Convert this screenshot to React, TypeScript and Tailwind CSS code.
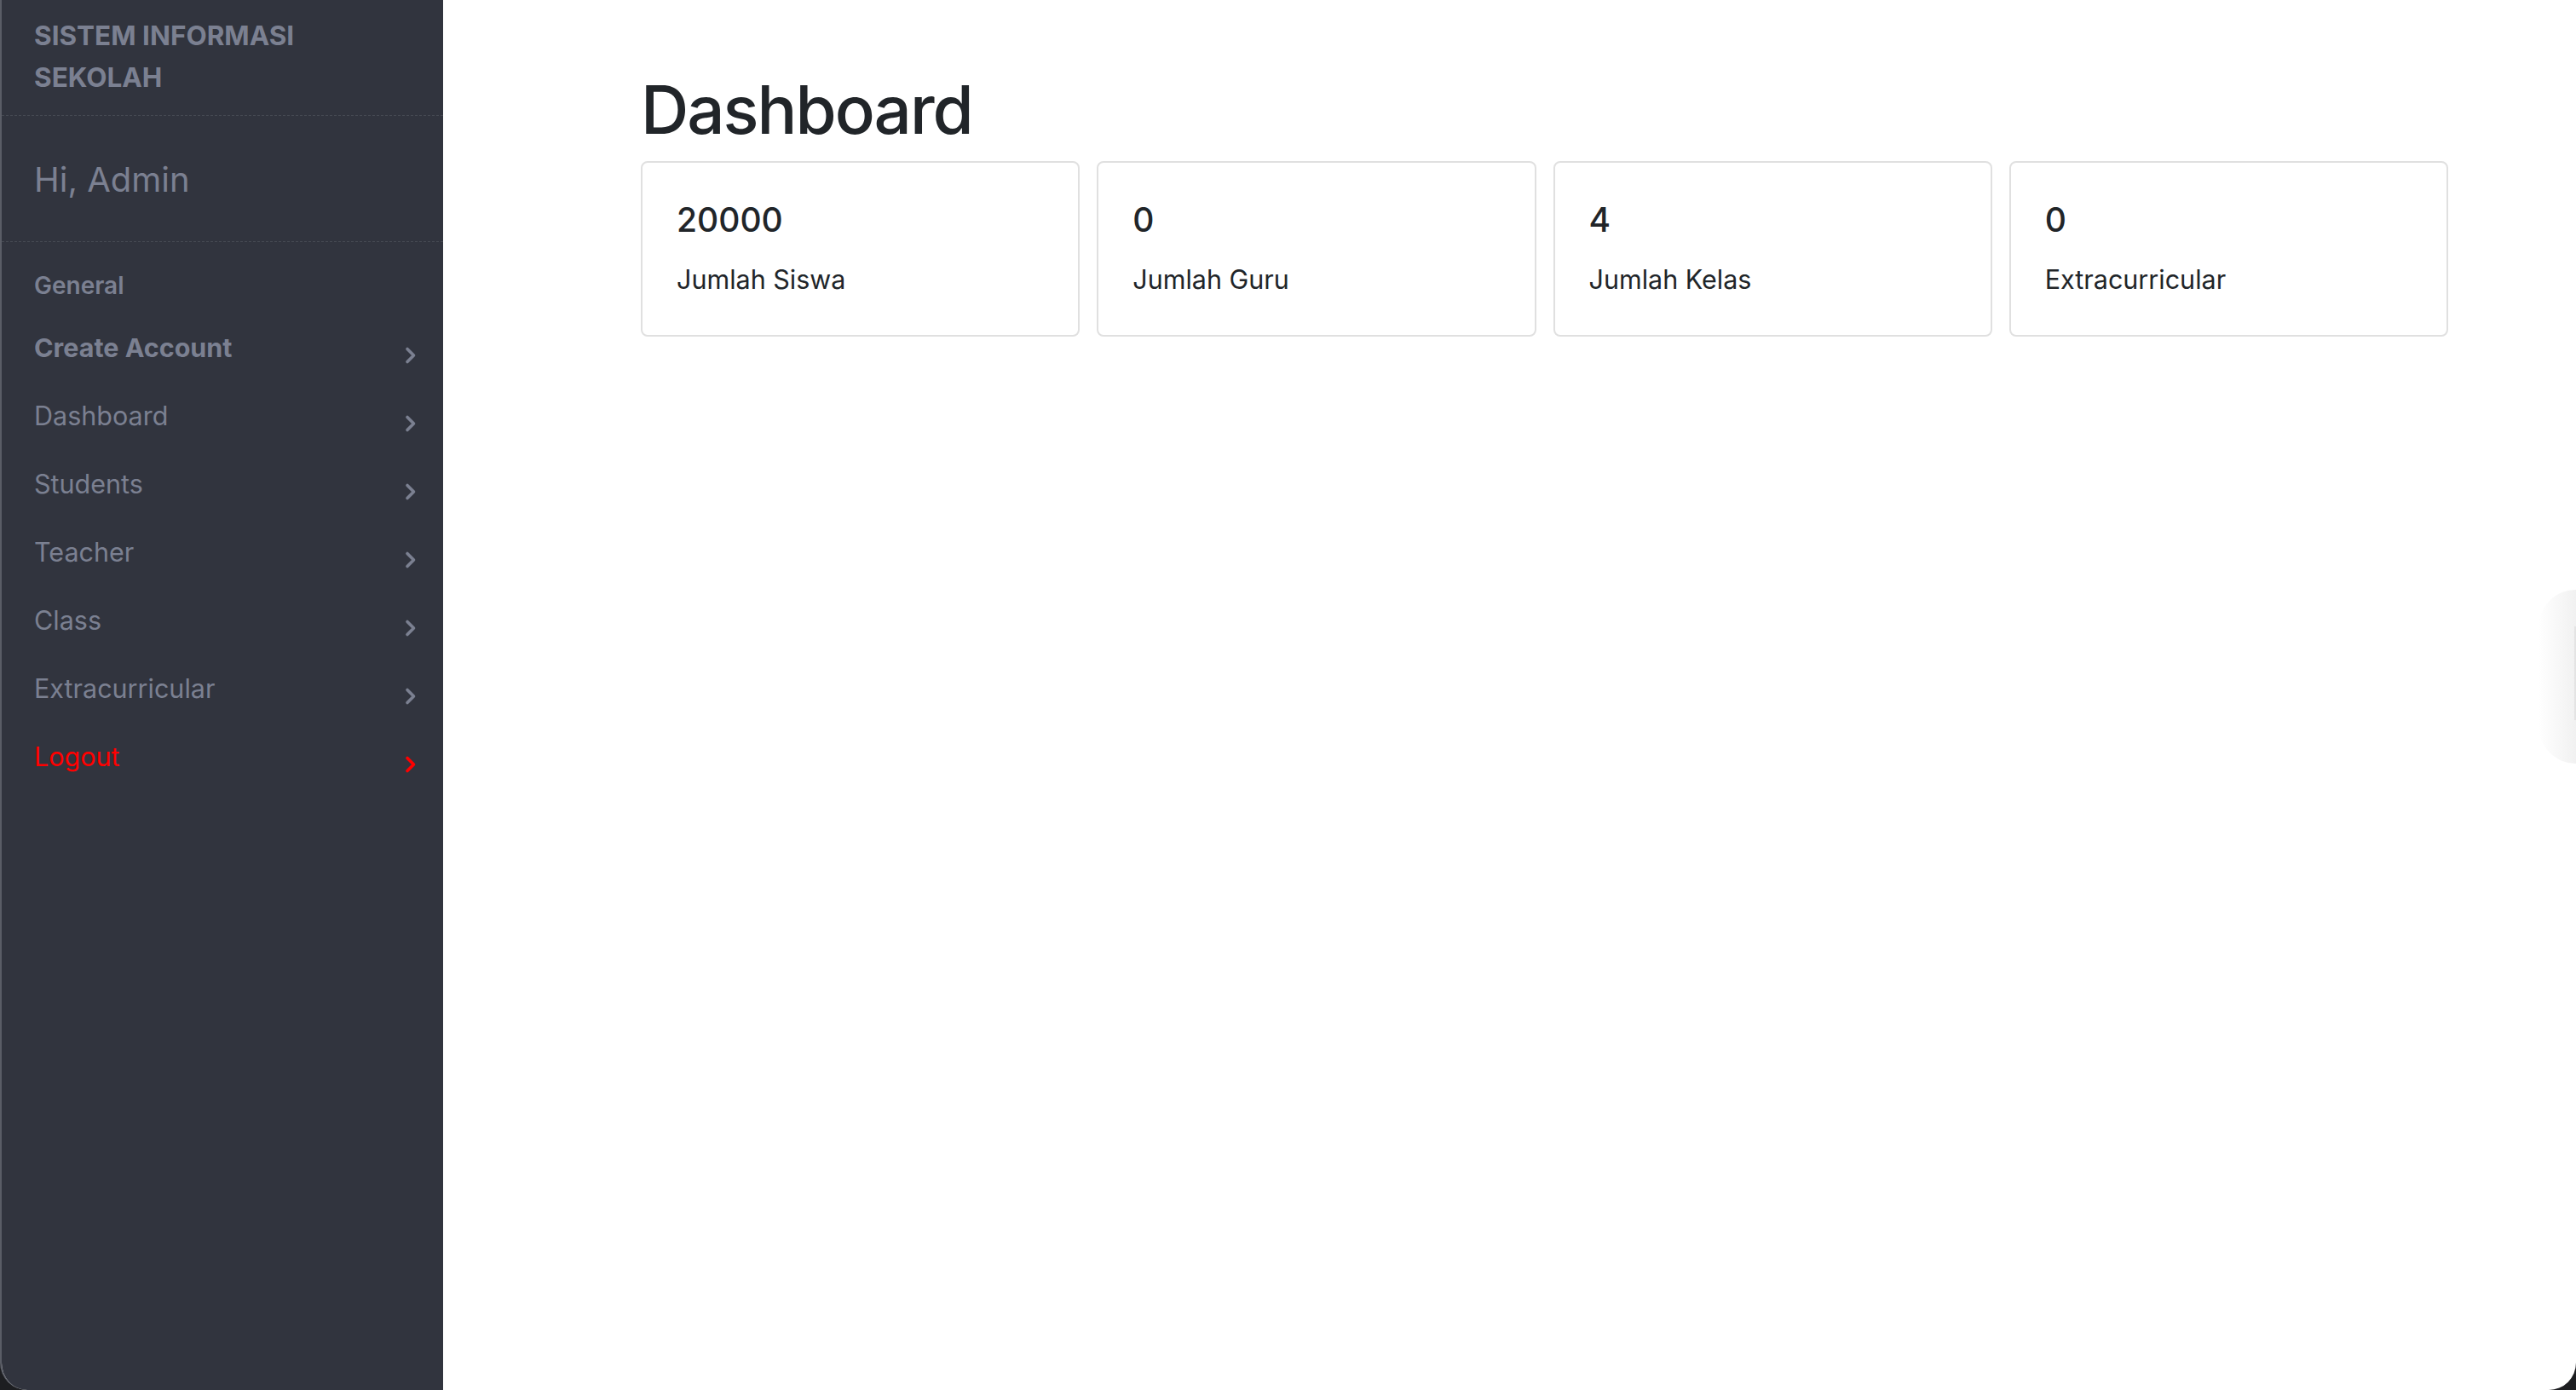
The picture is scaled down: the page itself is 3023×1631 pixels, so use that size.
import React from 'react';

const menu = [
    { label: 'Create Account', bold: true },
    { label: 'Dashboard' },
    { label: 'Students' },
    { label: 'Teacher' },
    { label: 'Class' },
    { label: 'Extracurricular' },
    { label: 'Logout', danger: true },
];

const stats = [
    { value: '20000', label: 'Jumlah Siswa' },
    { value: '0', label: 'Jumlah Guru' },
    { value: '4', label: 'Jumlah Kelas' },
    { value: '0', label: 'Extracurricular' },
];

function Chevron({ color }: { color: string }) {
    return (
        <svg width="16" height="22" viewBox="0 0 16 22" fill="none" className="mt-[18px]">
            <path d="M4 3.5 L11.5 11 L4 18.5" stroke={color} strokeWidth="3.6" strokeLinecap="round" strokeLinejoin="round" />
        </svg>
    );
}

export default function App() {
    return (
        <div className="h-screen w-full bg-[#1d1e21] font-['Inter',sans-serif]">
            <div className="relative flex h-full w-full overflow-hidden rounded-b-[32px] border-l-2 border-[#5a5d66] bg-white">
                {/* Sidebar */}
                <aside className="flex w-[518px] shrink-0 flex-col bg-[#31343e] text-[#7b8091]">
                    <div className="border-b border-dashed border-[#464a53] pl-[38px] pt-[17px] pb-[20px] text-[31.5px] font-bold uppercase leading-[49px]">
                        Sistem Informasi
                        <br />
                        Sekolah
                    </div>
                    <div className="flex h-[148px] items-center border-b border-dashed border-[#464a53] pl-[38px] pt-[3px] text-[40px] font-normal">
                        Hi, Admin
                    </div>

                    <div className="pl-[38px] pt-[35px] text-[28px] font-semibold leading-[32px]">General</div>

                    <nav className="mt-[17px] flex flex-col">
                        {menu.map((item) => (
                            <div key={item.label} className="flex h-[80px] items-center justify-between pl-[38px] pr-[30px]">
                                <span
                                    className={`text-[30.5px] leading-none ${item.bold ? 'font-bold' : 'font-normal'} ${item.danger ? 'text-[#ff0000]' : ''}`}
                                >
                                    {item.label}
                                </span>
                                <Chevron color={item.danger ? '#ff0000' : '#7b8091'} />
                            </div>
                        ))}
                    </nav>
                </aside>

                {/* Main */}
                <main className="flex-1 pl-[232px] pr-[150px] pt-[82px] text-[#212529]">
                    <h1 className="mb-[13px] text-[78px] font-medium leading-[1.2] tracking-[-2px]">Dashboard</h1>
                    <div className="grid grid-cols-4 gap-[20px]">
                        {stats.map((s) => (
                            <div key={s.label} className="rounded-[8px] border-2 border-[#e0e0e0] bg-white px-[40px] pt-[44px] pb-[42px]">
                                <div className="mb-[24px] text-[39px] font-medium leading-[1.2]">{s.value}</div>
                                <div className="text-[30.5px] leading-[1.5]">{s.label}</div>
                            </div>
                        ))}
                    </div>
                </main>

                {/* edge shadow on the right */}
                <div className="absolute right-0 top-[692px] h-[204px] w-[44px] rounded-l-full bg-gradient-to-l from-[#f1f1f1] to-white/0" />
                <div className="absolute right-0 top-[735px] h-[110px] w-[2px] bg-[#e4e4e4]" />
            </div>
        </div>
    );
}
